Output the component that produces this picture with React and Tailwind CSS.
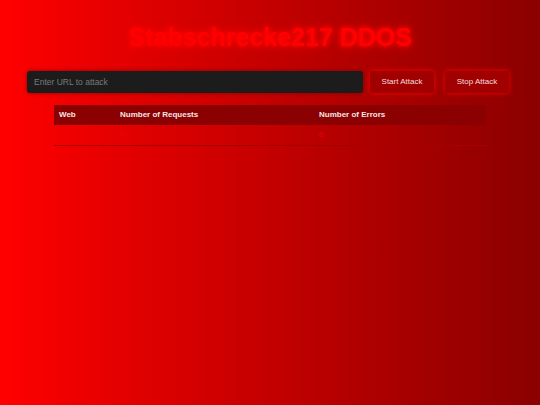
export default function App() {
  return (
    <div
      className="w-[540px] h-[405px] bg-gradient-to-r from-[#ff0000] to-[#8b0000] overflow-hidden"
      style={{ fontFamily: '"Liberation Sans", Arial, sans-serif' }}
    >
      <h1 className="pt-[22px] h-[52px] text-center text-[25px] leading-[30px] font-bold text-[#ff0000] [text-shadow:0_0_5px_#ff0000,0_0_8px_#ff0000]">
        Stabschrecke217 DDOS
      </h1>
      <div className="flex items-center pl-[27px] mt-[19px]">
        <input
          type="text"
          placeholder="Enter URL to attack"
          className="w-[336px] h-[22px] bg-[#1c1c1c] rounded-[3px] px-[7px] text-[8.5px] text-white placeholder:text-[#7a7a7a] outline-none shadow-[0_0_4px_rgba(120,0,0,0.8)]"
        />
        <button className="ml-[7px] w-[64px] h-[22px] bg-[#a00000] rounded-[3px] text-[8px] text-[#f4dede] shadow-[0_0_5px_#ff0000]">
          Start Attack
        </button>
        <button className="ml-[11px] w-[64px] h-[22px] bg-[#a00000] rounded-[3px] text-[8px] text-[#f4dede] shadow-[0_0_5px_#ff0000]">
          Stop Attack
        </button>
      </div>
      <table className="mt-[12px] mx-auto w-[432px] border-collapse text-[8px]">
        <thead>
          <tr className="bg-[#8b0000] h-[20px]">
            <th className="text-left font-bold text-[#f4e6e6] pl-[5px] w-[61px]">Web</th>
            <th className="text-left font-bold text-[#f4e6e6] pl-[5px] w-[199px]">Number of Requests</th>
            <th className="text-left font-bold text-[#f4e6e6] pl-[5px]">Number of Errors</th>
          </tr>
        </thead>
        <tbody>
          <tr className="h-[20px] border-b border-[#a80000]">
            <td className="pl-[5px]"></td>
            <td className="pl-[5px] text-[#f20000]">0</td>
            <td className="pl-[5px] text-[#f20000]">0</td>
          </tr>
        </tbody>
      </table>
    </div>
  );
}
